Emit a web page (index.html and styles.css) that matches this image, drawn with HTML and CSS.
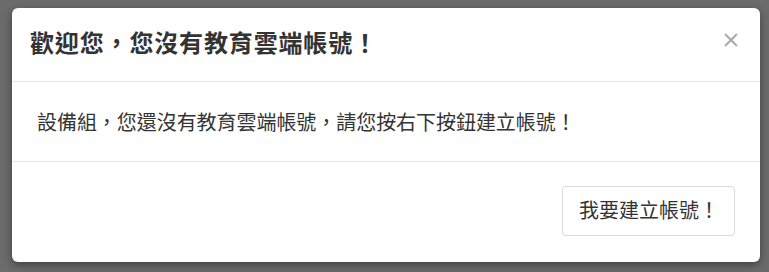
FILE: index.html
```html
<!DOCTYPE html>
<html lang="zh-Hant">
<head>
<meta charset="utf-8">
<title>歡迎您</title>
<link rel="stylesheet" href="styles.css">
</head>
<body>
<div class="modal">
  <div class="modal-header">
    <h4 class="modal-title">歡迎您，您沒有教育雲端帳號！</h4>
    <button class="close" type="button" aria-label="Close">
      <svg width="14" height="14" viewBox="0 0 14 14"><path d="M1 1L13 13M13 1L1 13" stroke="#a9a9a9" stroke-width="2" fill="none"/></svg>
    </button>
  </div>
  <div class="modal-body">設備組，您還沒有教育雲端帳號，請您按右下按鈕建立帳號！</div>
  <div class="modal-footer">
    <button class="btn" type="button">我要建立帳號！</button>
  </div>
</div>
</body>
</html>
```
FILE: styles.css
```css
html, body {
  margin: 0;
  padding: 0;
  height: 100%;
}
body {
  background: #6b6b6b;
  font-family: "Noto Sans CJK TC", "Noto Sans", sans-serif;
  color: #333;
  padding: 8px 9px 0 12px;
  box-sizing: border-box;
}
.modal {
  width: 748px;
  background: #fff;
  border-radius: 6px;
  box-shadow: 0 3px 9px rgba(0, 0, 0, 0.4);
}
.modal-header {
  display: flex;
  justify-content: space-between;
  align-items: flex-start;
  padding: 16px 22px 21px 18px;
  border-bottom: 1px solid #e5e5e5;
}
.modal-title {
  margin: 0;
  font-size: 24px;
  line-height: 36px;
  font-weight: 700;
  color: #333;
  letter-spacing: 0.85px;
}
.close {
  margin-top: 9px;
  padding: 0;
  border: 0;
  background: transparent;
  width: 14px;
  height: 14px;
  display: flex;
  cursor: pointer;
}
.modal-body {
  padding: 25px 25px 24px 25px;
  font-size: 20px;
  line-height: 30px;
  letter-spacing: -0.05px;
  border-bottom: 1px solid #e5e5e5;
}
.modal-footer {
  display: flex;
  justify-content: flex-end;
  padding: 24px 25px 26px 25px;
}
.btn {
  font-family: inherit;
  font-size: 20px;
  line-height: 30px;
  color: #333;
  background: #fff;
  border: 1px solid #d9d9d9;
  border-radius: 4px;
  padding: 8px 15px 10px 16px;
  cursor: pointer;
}
```
